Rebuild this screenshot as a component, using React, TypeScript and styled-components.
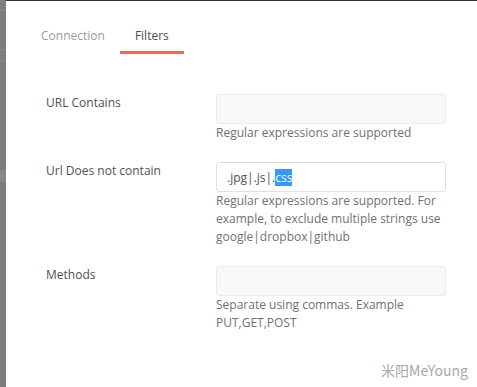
import React from "react";
import styled, { createGlobalStyle } from "styled-components";

const Global = createGlobalStyle`
  html, body { margin: 0; padding: 0; background: #fff; }
  body { font-family: "Open Sans", "Liberation Sans", sans-serif; }
  * { box-sizing: border-box; }
`;

const Page = styled.div`
  display: flex;
  width: 477px;
  height: 387px;
  overflow: hidden;
`;

const Backdrop = styled.div`
  width: 6px;
  flex: none;
  background: #7d7d7d;
  display: flex;
  flex-direction: column;
`;

const BackdropLine = styled.div<{ $h: number; $c?: string }>`
  height: ${(p) => p.$h}px;
  flex: none;
  background: ${(p) => p.$c || "transparent"};
`;

const Modal = styled.div`
  position: relative;
  flex: 1;
  background: #fff;
  border-top: 1px solid #333;
  display: flex;
  flex-direction: column;
`;

const TabBar = styled.div`
  display: flex;
  padding: 16px 0 0 20px;
`;

const Tab = styled.div<{ $active?: boolean }>`
  padding: 10px 15px 6px;
  line-height: 18px;
  font-size: 12px;
  color: ${(p) => (p.$active ? "#4d4d4d" : "#9b9b9b")};
  border-bottom: 3px solid ${(p) => (p.$active ? "#f26b3a" : "transparent")};
`;

const Form = styled.div`
  display: flex;
  flex-direction: column;
  gap: 20px;
  padding: 40px 31px 0 40px;
`;

const Row = styled.div`
  display: grid;
  grid-template-columns: 170px 230px;
`;

const Label = styled.div`
  font-size: 12px;
  line-height: 18px;
  color: #505050;
`;

const Field = styled.div`
  display: flex;
  flex-direction: column;
`;

const Input = styled.div<{ $filled?: boolean }>`
  height: 30px;
  border: 1px solid ${(p) => (p.$filled ? "#e0e0e0" : "#ebebeb")};
  border-radius: 3px;
  background: ${(p) => (p.$filled ? "#fff" : "#f8f8f8")};
  padding: 0 10px;
  display: flex;
  align-items: center;
  font-size: 12px;
  color: #505050;
`;

const Selected = styled.span`
  background: #3399ff;
  color: #fff;
`;

const Help = styled.div`
  font-size: 12px;
  line-height: 18px;
  color: #707070;
`;

const Watermark = styled.div`
  position: absolute;
  right: 9px;
  bottom: 7px;
  font-family: "Noto Sans CJK SC", "Open Sans", sans-serif;
  font-size: 14px;
  color: #a8a8a8;
`;

export default function App() {
  return (
    <>
      <Global />
      <Page>
        <Backdrop>
          <BackdropLine $h={10} />
          <BackdropLine $h={1} $c="#8a8a8a" />
          <BackdropLine $h={38} />
          <BackdropLine $h={1} $c="#8a8a8a" />
          <BackdropLine $h={10} />
          <BackdropLine $h={1} $c="#8a8a8a" />
          <BackdropLine $h={109} />
          <BackdropLine $h={12} $c="#868a8f" />
        </Backdrop>
        <Modal>
          <TabBar>
            <Tab>Connection</Tab>
            <Tab $active>Filters</Tab>
          </TabBar>
          <Form>
            <Row>
              <Label>URL Contains</Label>
              <Field>
                <Input />
                <Help>Regular expressions are supported</Help>
              </Field>
            </Row>
            <Row>
              <Label>Url Does not contain</Label>
              <Field>
                <Input $filled>
                  .jpg|.js|.<Selected>css</Selected>
                </Input>
                <Help>
                  Regular expressions are supported. For example, to exclude
                  multiple strings use google|dropbox|github
                </Help>
              </Field>
            </Row>
            <Row>
              <Label>Methods</Label>
              <Field>
                <Input />
                <Help>
                  Separate using commas. Example
                  <br />
                  PUT,GET,POST
                </Help>
              </Field>
            </Row>
          </Form>
          <Watermark>米阳MeYoung</Watermark>
        </Modal>
      </Page>
    </>
  );
}
